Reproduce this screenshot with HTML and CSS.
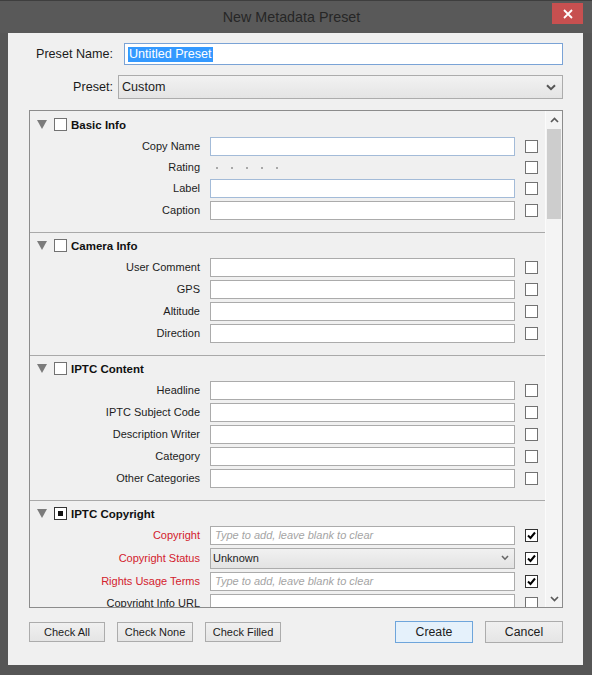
FILE: index.html
```html
<!DOCTYPE html>
<html>
<head>
<meta charset="utf-8">
<link rel="stylesheet" href="styles.css">
</head>
<body>
<div class="window">
  <div class="titlebar">
    <span></span>
    <span class="title">New Metadata Preset</span>
    <span class="close-wrap"><span class="close"><svg width="10" height="10" viewBox="0 0 10 10"><path d="M1 1 L9 9 M9 1 L1 9" stroke="#fff" stroke-width="1.8"/></svg></span></span>
  </div>
  <div class="content">
    <div class="top-row">
      <label class="top-label">Preset Name:</label>
      <div class="name-input"><span class="sel">Untitled Preset</span></div>
    </div>
    <div class="top-row preset-row">
      <label class="top-label">Preset:</label>
      <div class="preset-select"><span>Custom</span><svg width="10" height="7" viewBox="0 0 10 7"><path d="M1 1.2 L5 5.2 L9 1.2" stroke="#555" stroke-width="2" fill="none"/></svg></div>
    </div>

    <div class="panel">
      <div class="sections">
        <div class="section">
          <div class="sec-head">
            <svg class="tri" width="10" height="9" viewBox="0 0 10 9"><path d="M0 0 H10 L5 9 Z" fill="#7b7b7b"/></svg>
            <span class="box"></span>
            <span class="sec-title">Basic Info</span>
          </div>
          <div class="row"><span class="lbl">Copy Name</span><span class="field blue"></span><span class="box"></span></div>
          <div class="row rating"><span class="lbl">Rating</span><span class="stars"><i></i><i></i><i></i><i></i><i></i></span><span class="box"></span></div>
          <div class="row"><span class="lbl">Label</span><span class="field blue"></span><span class="box"></span></div>
          <div class="row"><span class="lbl">Caption</span><span class="field"></span><span class="box"></span></div>
        </div>
        <div class="section">
          <div class="sec-head">
            <svg class="tri" width="10" height="9" viewBox="0 0 10 9"><path d="M0 0 H10 L5 9 Z" fill="#7b7b7b"/></svg>
            <span class="box"></span>
            <span class="sec-title">Camera Info</span>
          </div>
          <div class="row"><span class="lbl">User Comment</span><span class="field"></span><span class="box"></span></div>
          <div class="row"><span class="lbl">GPS</span><span class="field"></span><span class="box"></span></div>
          <div class="row"><span class="lbl">Altitude</span><span class="field"></span><span class="box"></span></div>
          <div class="row"><span class="lbl">Direction</span><span class="field"></span><span class="box"></span></div>
        </div>
        <div class="section">
          <div class="sec-head">
            <svg class="tri" width="10" height="9" viewBox="0 0 10 9"><path d="M0 0 H10 L5 9 Z" fill="#7b7b7b"/></svg>
            <span class="box"></span>
            <span class="sec-title">IPTC Content</span>
          </div>
          <div class="row"><span class="lbl">Headline</span><span class="field"></span><span class="box"></span></div>
          <div class="row"><span class="lbl">IPTC Subject Code</span><span class="field"></span><span class="box"></span></div>
          <div class="row"><span class="lbl">Description Writer</span><span class="field"></span><span class="box"></span></div>
          <div class="row"><span class="lbl">Category</span><span class="field"></span><span class="box"></span></div>
          <div class="row"><span class="lbl">Other Categories</span><span class="field"></span><span class="box"></span></div>
        </div>
        <div class="section last">
          <div class="sec-head">
            <svg class="tri" width="10" height="9" viewBox="0 0 10 9"><path d="M0 0 H10 L5 9 Z" fill="#7b7b7b"/></svg>
            <span class="box mixed"><b></b></span>
            <span class="sec-title">IPTC Copyright</span>
          </div>
          <div class="row"><span class="lbl red">Copyright</span><span class="field"><span class="ph">Type to add, leave blank to clear</span></span><span class="box on"><svg width="11" height="11" viewBox="0 0 11 11"><path d="M2 5.5 L4.5 8 L9 2.5" stroke="#000" stroke-width="2" fill="none"/></svg></span></div>
          <div class="row status"><span class="lbl red">Copyright Status</span><span class="field dropdown"><span>Unknown</span><svg width="8" height="6" viewBox="0 0 8 6"><path d="M1 1 L4 4.2 L7 1" stroke="#666" stroke-width="1.6" fill="none"/></svg></span><span class="box on"><svg width="11" height="11" viewBox="0 0 11 11"><path d="M2 5.5 L4.5 8 L9 2.5" stroke="#000" stroke-width="2" fill="none"/></svg></span></div>
          <div class="row"><span class="lbl red">Rights Usage Terms</span><span class="field"><span class="ph">Type to add, leave blank to clear</span></span><span class="box on"><svg width="11" height="11" viewBox="0 0 11 11"><path d="M2 5.5 L4.5 8 L9 2.5" stroke="#000" stroke-width="2" fill="none"/></svg></span></div>
          <div class="row"><span class="lbl">Copyright Info URL</span><span class="field"></span><span class="box"></span></div>
        </div>
      </div>
      <div class="scrollbar">
        <div class="sb-btn"><svg width="9" height="6" viewBox="0 0 9 6"><path d="M1 5 L4.5 1.5 L8 5" stroke="#5a5a5a" stroke-width="1.7" fill="none"/></svg></div>
        <div class="sb-track"><div class="sb-thumb"></div></div>
        <div class="sb-btn down"><svg width="9" height="6" viewBox="0 0 9 6"><path d="M1 1 L4.5 4.5 L8 1" stroke="#5a5a5a" stroke-width="1.7" fill="none"/></svg></div>
      </div>
    </div>

    <div class="buttons">
      <button class="btn small">Check All</button>
      <button class="btn small">Check None</button>
      <button class="btn small">Check Filled</button>
      <span class="spacer"></span>
      <button class="btn big default">Create</button>
      <button class="btn big">Cancel</button>
    </div>
  </div>
</div>
</body>
</html>
```

FILE: styles.css
```css
* { box-sizing: border-box; }
html, body { margin: 0; padding: 0; }
body {
  width: 592px;
  height: 675px;
  background: #565656;
  font-family: "Liberation Sans", Arial, sans-serif;
  color: #1c1c1c;
  overflow: hidden;
}
.window {
  width: 592px;
  height: 675px;
  display: flex;
  flex-direction: column;
  border-top: 1px solid #3e3e3e;
}
.titlebar {
  height: 32px;
  display: grid;
  grid-template-columns: 1fr auto 1fr;
  align-items: start;
  padding-right: 9px;
  background: #595959;
}
.title {
  font-size: 14.3px;
  color: #262626;
  line-height: 32px;
}
.close-wrap { display: flex; justify-content: flex-end; }
.close {
  width: 31px;
  height: 21px;
  margin-top: 2px;
  background: #c75050;
  display: flex;
  align-items: center;
  justify-content: center;
}
.content {
  flex: 1;
  margin: 0 9px 10px 8px;
  background: #f0f0f0;
  padding: 10px 20px 0 21px;
  display: flex;
  flex-direction: column;
}
.top-row {
  display: flex;
  align-items: center;
  height: 22px;
}
.top-label {
  width: 84px;
  text-align: right;
  font-size: 12.6px;
  color: #1a1a1a;
}
.name-input {
  flex: 1;
  height: 22px;
  margin-left: 11px;
  background: #fff;
  border: 1px solid #7aa3d6;
  padding-left: 3px;
  display: flex;
  align-items: center;
  font-size: 12.6px;
}
.sel {
  background: #3399ff;
  color: #fff;
  line-height: 15px;
  padding: 0 1px;
}
.preset-row {
  margin-top: 10px;
  height: 24px;
}
.preset-select {
  flex: 1;
  height: 24px;
  margin-left: 5px;
  border: 1px solid #acacac;
  background: linear-gradient(#f2f2f2, #e4e4e4);
  display: flex;
  align-items: center;
  justify-content: space-between;
  padding: 0 6px 0 3px;
  font-size: 12.6px;
}
.panel {
  margin-top: 11px;
  height: 498px;
  border: 1px solid #8c8c8c;
  background: #f0f0f0;
  display: flex;
}
.sections {
  flex: 1;
  overflow: hidden;
  padding-top: 1px;
}
.section {
  padding: 2px 0 11px;
  border-bottom: 1px solid #a9a9a9;
}
.sec-head {
  height: 21px;
  display: flex;
  align-items: center;
}
.tri { margin-left: 7px; }
.sec-head .box { margin-left: 7px; }
.sec-title {
  margin-left: 4px;
  font-size: 11.5px;
  font-weight: bold;
  color: #111;
}
.box {
  width: 13px;
  height: 13px;
  border: 1px solid #727272;
  background: #fff;
  display: inline-flex;
  align-items: center;
  justify-content: center;
  flex: none;
}
.box.on { border-color: #333; }
.box.mixed { border-color: #333; }
.box.mixed b {
  width: 5px;
  height: 5px;
  background: #111;
}
.row {
  height: 22px;
  display: flex;
  align-items: center;
}
.row.rating { height: 20px; }
.row.status { height: 24px; }
.lbl {
  width: 170px;
  text-align: right;
  font-size: 11px;
  color: #1c1c1c;
}
.lbl.red { color: #d3212d; }
.field {
  width: 305px;
  height: 19px;
  margin-left: 10px;
  margin-right: 10px;
  background: #fff;
  border: 1px solid #ababab;
  display: flex;
  align-items: center;
  padding-left: 4px;
  font-size: 11px;
}
.field.blue { border-color: #a3bbd8; }
.ph {
  font-style: italic;
  color: #a4a4a4;
}
.field.dropdown {
  height: 21px;
  background: linear-gradient(#f1f1f1, #e3e3e3);
  border-color: #acacac;
  justify-content: space-between;
  padding: 0 5px 0 2px;
  color: #1c1c1c;
}
.stars {
  width: 305px;
  margin-left: 10px;
  margin-right: 10px;
  display: flex;
  padding-left: 6px;
  gap: 13px;
}
.stars i {
  width: 2px;
  height: 2px;
  background: #a8a8a8;
  margin-top: 2px;
}
.scrollbar {
  width: 17px;
  background: #f4f4f4;
  border-left: 1px solid #fbfbfb;
  display: flex;
  flex-direction: column;
}
.sb-btn {
  height: 17px;
  display: flex;
  align-items: center;
  justify-content: center;
}
.sb-track {
  flex: 1;
  padding: 1px 1px 0 1px;
}
.sb-thumb {
  height: 90px;
  background: #cdcdcd;
}
.buttons {
  margin-top: 13px;
  display: flex;
  align-items: center;
}
.btn {
  font-family: "Liberation Sans", Arial, sans-serif;
  color: #1c1c1c;
  border: 1px solid #acacac;
  background: linear-gradient(#f0f0f0, #e5e5e5);
  padding: 0;
  border-radius: 0;
}
.btn.small {
  width: 76px;
  height: 20px;
  font-size: 11px;
  margin-right: 12px;
}
.btn.big {
  width: 78px;
  height: 22px;
  font-size: 12.3px;
  margin-left: 12px;
}
.btn.default {
  border-color: #6ea5db;
  background: linear-gradient(#ecf4fc, #dcecfc);
  background: #e5f1fb;
}
.spacer { flex: 1; }
```
